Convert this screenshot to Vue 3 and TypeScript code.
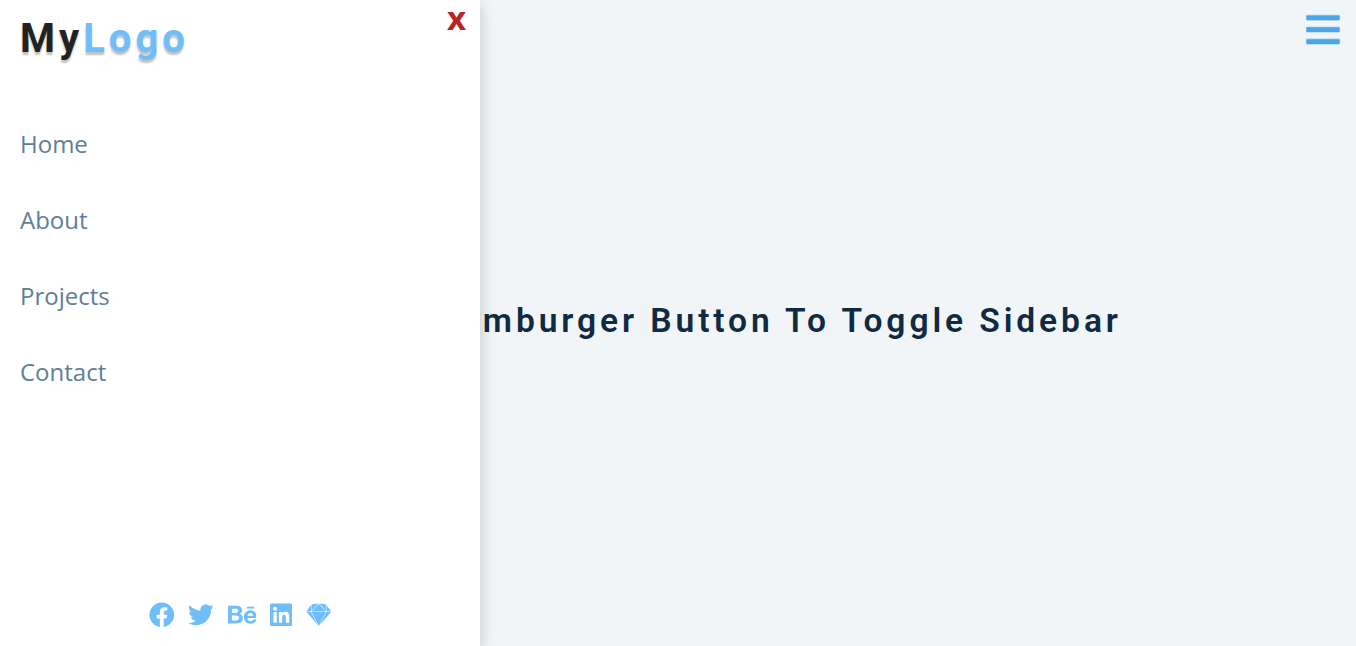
<script setup lang="ts">
import { ref } from 'vue'

interface SocialLink {
  name: string
  width: number
  path: string
}

const open = ref<boolean>(true)
const links: string[] = ['Home', 'About', 'Projects', 'Contact']

const socials: SocialLink[] = [
  {
    name: 'Facebook',
    width: 512,
    path: 'M504 256C504 119 393 8 256 8S8 119 8 256c0 123.78 90.69 226.38 209.25 245V327.69h-63V256h63v-54.64c0-62.15 37-96.48 93.67-96.48 27.14 0 55.52 4.84 55.52 4.84v61h-31.28c-30.8 0-40.41 19.12-40.41 38.73V256h68.78l-11 71.69h-57.78V501C413.31 482.38 504 379.78 504 256z',
  },
  {
    name: 'Twitter',
    width: 512,
    path: 'M459.37 151.716c.325 4.548.325 9.097.325 13.645 0 138.72-105.583 298.558-298.558 298.558-59.452 0-114.68-17.219-161.137-47.106 8.447.974 16.568 1.299 25.34 1.299 49.055 0 94.213-16.568 130.274-44.832-46.132-.975-84.792-31.188-98.112-72.772 6.498.974 12.995 1.624 19.818 1.624 9.421 0 18.843-1.3 27.614-3.573-48.081-9.747-84.143-51.98-84.143-102.985v-1.299c13.969 7.797 30.214 12.67 47.431 13.319-28.264-18.843-46.781-51.005-46.781-87.391 0-19.492 5.197-37.36 14.294-52.954 51.655 63.675 129.3 105.258 216.365 109.807-1.624-7.797-2.599-15.918-2.599-24.04 0-57.828 46.782-104.934 104.934-104.934 30.213 0 57.502 12.67 76.67 33.137 23.715-4.548 46.456-13.32 66.599-25.34-7.798 24.366-24.366 44.833-46.132 57.827 21.117-2.273 41.584-8.122 60.426-16.243-14.292 20.791-32.161 39.308-52.628 54.253z',
  },
  {
    name: 'Behance',
    width: 576,
    path: 'M232 237.2c31.8-15.2 48.4-38.2 48.4-74 0-70.6-52.6-87.8-113.3-87.8H0v354.4h171.8c64.4 0 124.9-30.9 124.9-102.9 0-44.5-21.1-77.4-64.7-89.7zM77.9 135.9H151c28.1 0 53.4 7.9 53.4 40.5 0 30.1-19.7 42.2-47.5 42.2h-79v-82.7zm83.3 233.7H77.9V272h84.9c34.3 0 56 14.3 56 50.6 0 35.8-25.9 47-57.6 47zm358.5-240.7H376V94h143.7v34.9zM576 305.2c0-75.9-44.4-139.2-124.9-139.2-78.2 0-131.3 58.8-131.3 135.8 0 79.9 50.3 134.7 131.3 134.7 61.3 0 101-27.6 120.1-86.3H509c-6.7 21.9-34.3 33.5-55.7 33.5-41.3 0-63-24.2-63-65.3h185.1c.3-4.2.6-8.7.6-13.2zM390.4 274c2.3-33.7 24.7-54.8 58.5-54.8 35.4 0 53.2 20.8 56.2 54.8H390.4z',
  },
  {
    name: 'LinkedIn',
    width: 448,
    path: 'M416 32H31.9C14.3 32 0 46.5 0 64.3v383.4C0 465.5 14.3 480 31.9 480H416c17.6 0 32-14.5 32-32.3V64.3c0-17.8-14.4-32.3-32-32.3zM135.4 416H69V202.2h66.5V416zm-33.2-243c-21.3 0-38.5-17.3-38.5-38.5S80.9 96 102.2 96c21.2 0 38.5 17.3 38.5 38.5 0 21.3-17.2 38.5-38.5 38.5zm282.1 243h-66.4V312c0-24.8-.5-56.7-34.5-56.7-34.6 0-39.9 27-39.9 54.9V416h-66.4V202.2h63.7v29.2h.9c8.9-16.8 30.6-34.5 62.9-34.5 67.2 0 79.7 44.3 79.7 101.9V416z',
  },
  {
    name: 'Sketch',
    width: 512,
    path: 'M27.5 162.2L9 187.1h90.5l6.9-130.7-78.9 105.8zM396.3 45.7L267.7 32l135.7 147.2-7.1-133.5zM112.2 218.3l-11.2-22H9.9L234.8 458zm2-31.2h284l-81.5-88.5L256.3 33zm297.3 9.1L277.6 458l224.8-261.7h-90.9zM415.4 69L406 56.4l.9 17.3 6.1 113.4h90.3zM113.5 93.5l-4.6 85.6L244.7 32 116.1 45.7zm287.7 102.7h-290l42.4 82.9L256.3 480l144.9-283.8z',
  },
]
</script>

<template>
  <div class="page">
    <main class="main">
      <h1 class="title">Click The Hamburger Button To Toggle Sidebar</h1>
    </main>

    <button class="toggle" aria-label="Open menu" @click="open = true">
      <svg class="bars" viewBox="0 0 34 38">
        <rect x="0.5" y="5.4" width="33" height="4.7" rx="0.8" />
        <rect x="0.5" y="17.3" width="33" height="4.7" rx="0.8" />
        <rect x="0.5" y="29.2" width="33" height="4.7" rx="0.8" />
      </svg>
    </button>

    <aside v-if="open" class="sidebar">
      <header class="head">
        <div class="logo">My<span class="accent">Logo</span></div>
        <button class="close" aria-label="Close menu" @click="open = false">x</button>
      </header>
      <nav class="nav">
        <a v-for="link in links" :key="link" class="link">{{ link }}</a>
      </nav>
      <footer class="socials">
        <a v-for="s in socials" :key="s.name" :aria-label="s.name" class="social">
          <svg class="icon" :viewBox="`0 0 ${s.width} 512`"><path :d="s.path" /></svg>
        </a>
      </footer>
    </aside>
  </div>
</template>

<style>
body {
  margin: 0;
  overflow: hidden;
}
</style>

<style scoped>
.page {
  position: relative;
  height: 100vh;
  overflow: hidden;
  background: #f1f5f8;
  font-family: 'Open Sans', sans-serif;
}
.main {
  height: 100%;
  display: flex;
  align-items: center;
  justify-content: center;
}
.title {
  margin: 0 0 5px 12px;
  font: 600 33.6px/1.25 Roboto, sans-serif;
  letter-spacing: 3.91px;
  color: #102a42;
  white-space: nowrap;
}
.toggle {
  position: absolute;
  top: 10px;
  right: 16px;
  padding: 0;
  border: 0;
  background: transparent;
  cursor: pointer;
}
.bars {
  display: block;
  height: 38px;
  width: 34px;
  overflow: visible;
  fill: #49a6e9;
  stroke: #49a6e9;
  stroke-width: 1.2px;
  stroke-opacity: 0.5;
}
.sidebar {
  position: absolute;
  top: 0;
  left: 0;
  width: 480px;
  height: 100%;
  display: flex;
  flex-direction: column;
  background: #fff;
  box-shadow: 0 5px 15px rgba(0, 0, 0, 0.2);
}
.head {
  display: flex;
  justify-content: space-between;
  align-items: flex-start;
  height: 106px;
  padding: 0 14px 0 20px;
}
.logo {
  margin-top: 14px;
  font: 700 40px/50px Roboto, sans-serif;
  letter-spacing: 4px;
  color: #222;
  text-shadow: 0 3px 2px rgba(0, 0, 0, 0.25);
}
.accent {
  color: #6fbefa;
}
.close {
  padding: 0;
  border: 0;
  background: transparent;
  font: 700 33px/36px 'Open Sans', sans-serif;
  color: #bb2525;
  cursor: pointer;
}
.nav {
  flex: 1;
}
.link {
  display: block;
  padding-left: 20px;
  height: 76px;
  font-size: 24px;
  line-height: 76px;
  color: #617d98;
}
.socials {
  display: flex;
  justify-content: center;
  gap: 13.5px;
  padding: 0 0 18px 0.6px;
}
.social {
  display: flex;
}
.icon {
  height: 25.6px;
  fill: #6fbefa;
}
</style>
